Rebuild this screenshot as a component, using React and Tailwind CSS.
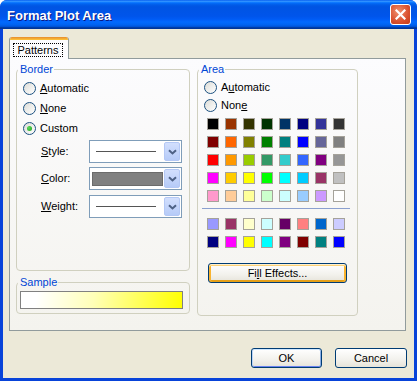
import React from "react";

const areaRows = [
  ["#000000", "#993300", "#333300", "#003300", "#003366", "#000080", "#333399", "#333333"],
  ["#800000", "#FF6600", "#808000", "#008000", "#008080", "#0000FF", "#666699", "#808080"],
  ["#FF0000", "#FF9900", "#99CC00", "#339966", "#33CCCC", "#3366FF", "#800080", "#969696"],
  ["#FF00FF", "#FFCC00", "#FFFF00", "#00FF00", "#00FFFF", "#00CCFF", "#993366", "#C0C0C0"],
  ["#FF99CC", "#FFCC99", "#FFFF99", "#CCFFCC", "#CCFFFF", "#99CCFF", "#CC99FF", "#FFFFFF"],
];

// chart fill / line colours below the separator
const chartRows = [
  ["#9999FF", "#993366", "#FFFFCC", "#CCFFFF", "#660066", "#FF8080", "#0066CC", "#CCCCFF"],
  ["#000080", "#FF00FF", "#FFFF00", "#00FFFF", "#800080", "#800000", "#008080", "#0000FF"],
];

function Radio({ checked, children, className = "" }) {
  return (
    <label className={`flex items-center gap-[4px] ${className}`}>
      <span className="w-[13px] h-[13px] rounded-full border border-[#1C5180] bg-[linear-gradient(135deg,#DCDCD7,#FFFFFF)] flex items-center justify-center">
        {checked && (
          <span className="w-[5px] h-[5px] rounded-full bg-[radial-gradient(circle_at_35%_35%,#5ADA5A,#21A121)]"></span>
        )}
      </span>
      <span>{children}</span>
    </label>
  );
}

function Chevron() {
  return (
    <svg width="9" height="6" viewBox="0 0 9 6" fill="none">
      <path d="M1 1.2L4.5 4.5L8 1.2" stroke="#4D6185" strokeWidth="2" />
    </svg>
  );
}

function Combo({ children }) {
  return (
    <div className="w-[93px] h-[23px] border border-[#7F9DB9] bg-white flex">
      <div className="flex-1 flex items-center">{children}</div>
      <div className="w-[16px] my-px mr-px rounded-[2px] border border-[#B4C8F5] bg-[linear-gradient(to_bottom,#D2DFFD,#B6CBF8)] flex items-center justify-center">
        <Chevron />
      </div>
    </div>
  );
}

function Swatches({ rows }) {
  return (
    <div className="grid grid-cols-[repeat(8,12px)] auto-rows-[12px] gap-[6px]">
      {rows.flat().map((c, i) => (
        <div key={i} className="border border-[#A5A29A]" style={{ backgroundColor: c }}></div>
      ))}
    </div>
  );
}

function XpButton({ children, variant, className = "" }) {
  const ring =
    variant === "default"
      ? "shadow-[inset_0_1px_0_#CEE7FF,inset_1px_0_0_#BCD4F6,inset_-1px_0_0_#89ADE4,inset_0_-1px_0_#6982EE]"
      : variant === "hot"
      ? "shadow-[inset_0_1px_0_#FFF0CF,inset_0_2px_0_#FCD277,inset_2px_0_0_#F8B330,inset_-2px_0_0_#F8B330,inset_0_-2px_0_#E5A01A]"
      : "";
  return (
    <button
      className={`h-[20px] rounded-[3px] border border-[#003C74] bg-[linear-gradient(to_bottom,#FFFFFF,#F2F1EC_60%,#E6E3D9)] text-[11px] leading-none flex items-center justify-center ${ring} ${className}`}
    >
      {children}
    </button>
  );
}

export default function App() {
  return (
    <div className="w-[417px] h-[381px] bg-white font-['Liberation_Sans',Arial,sans-serif] text-[11px] leading-[13px] text-black">
      <div className="w-full h-full flex flex-col rounded-t-[7px] overflow-hidden bg-[#0843D9]">
        {/* Title bar */}
        <div className="h-[29px] shrink-0 flex items-center justify-between pl-[7px] pr-[6px] bg-[linear-gradient(to_bottom,#0058EE_0%,#3593FF_4%,#288EFF_6%,#127DFF_8%,#036FFC_10%,#0262EE_14%,#0057E5_20%,#0054E3_24%,#0055EB_56%,#005BF5_66%,#026AFE_76%,#0062EF_86%,#0052D6_92%,#0040AB_94%,#003092_100%)]">
          <span className="text-white font-bold text-[13px] pt-[2px] [text-shadow:1px_1px_#0A1883]">
            Format Plot Area
          </span>
          <div className="w-[21px] h-[21px] rounded-[3px] border border-white bg-[radial-gradient(circle_at_40%_35%,#F0916F,#D9502E_60%,#C13A18)] flex items-center justify-center">
            <svg width="11" height="11" viewBox="0 0 11 11">
              <path d="M1.5 1.5L9.5 9.5M9.5 1.5L1.5 9.5" stroke="white" strokeWidth="2.2" strokeLinecap="square" />
            </svg>
          </div>
        </div>

        {/* Client area */}
        <div className="flex-1 mx-[3px] mb-[3px] bg-[#ECE9D8] flex flex-col pt-[8px] pl-[6px]">
          <div className="flex h-[22px] -mb-px relative z-10">
            <div className="w-[60px] h-full flex flex-col rounded-t-[3px] overflow-hidden border-x border-[#919B9C] bg-[#FCFCFE]">
              <div className="h-[3px] bg-[linear-gradient(to_bottom,#E68B2C,#FFC73C)]"></div>
              <div className="flex-1 pt-[3px] pl-[3px]">
                <div className="w-[50px] h-[14px] border border-dotted border-black flex items-center justify-center">
                  Patterns
                </div>
              </div>
            </div>
          </div>

          <div className="w-[397px] h-[273px] border border-[#919B9C] bg-[linear-gradient(to_bottom,#FCFCFE,#F4F3EE)] flex gap-[7px] pl-[6px] pt-[4px]">
            <div className="w-[174px] flex flex-col gap-[5px]">
              <fieldset className="h-[208px] border border-[#D0D0BF] rounded-[4px]">
                <legend className="ml-px pl-[2px] pr-[1px] leading-[12px] text-[#0046D5]">Border</legend>
                <div className="flex flex-col pl-[6px] mt-[3px]">
                  <Radio className="h-[20px]">
                    <span className="underline">A</span>utomatic
                  </Radio>
                  <Radio className="h-[20px]">
                    <span className="underline">N</span>one
                  </Radio>
                  <Radio className="h-[20px]" checked>
                    Custom
                  </Radio>
                </div>
                <div className="flex flex-col pl-[24px] mt-[2px]">
                  <div className="flex items-center">
                    <span className="w-[48px]">
                      <span className="underline">S</span>tyle:
                    </span>
                    <Combo>
                      <div className="ml-[6px] w-[60px] h-px bg-[#555555]"></div>
                    </Combo>
                  </div>
                  <div className="flex items-center mt-[4px]">
                    <span className="w-[48px]">
                      <span className="underline">C</span>olor:
                    </span>
                    <Combo>
                      <div className="ml-[2px] w-[71px] h-[14px] bg-[#808080] border border-[#6B6B6B]"></div>
                    </Combo>
                  </div>
                  <div className="flex items-center mt-[5px]">
                    <span className="w-[48px]">
                      <span className="underline">W</span>eight:
                    </span>
                    <Combo>
                      <div className="ml-[6px] w-[60px] h-px bg-[#555555]"></div>
                    </Combo>
                  </div>
                </div>
              </fieldset>

              <fieldset className="h-[38px] border border-[#D0D0BF] rounded-[4px]">
                <legend className="ml-px pl-[2px] pr-[1px] leading-[12px] text-[#0046D5]">Sample</legend>
                <div className="ml-[3px] mt-[3px] w-[163px] h-[18px] border border-[#808080] bg-[linear-gradient(100deg,#FFFFFF_10%,#FFFFB8_45%,#FFFF00_100%)]"></div>
              </fieldset>
            </div>

            <fieldset className="w-[161px] h-[253px] border border-[#D0D0BF] rounded-[4px]">
              <legend className="ml-px pl-[2px] pr-[1px] leading-[12px] text-[#0046D5]">Area</legend>
              <div className="flex flex-col pl-[6px] mt-[3px]">
                <Radio className="h-[18px]">
                  A<span className="underline">u</span>tomatic
                </Radio>
                <Radio className="h-[18px]">
                  Non<span className="underline">e</span>
                </Radio>
              </div>
              <div className="ml-[9px] mt-[4px]">
                <Swatches rows={areaRows} />
              </div>
              <div className="ml-[4px] mt-[6px] w-[148px] h-px bg-[#8BA0CF]"></div>
              <div className="ml-[9px] mt-[9px]">
                <Swatches rows={chartRows} />
              </div>
              <XpButton variant="hot" className="ml-[10px] mt-[15px] w-[139px]">
                Fi<span className="underline">l</span>l Effects...
              </XpButton>
            </fieldset>
          </div>

          <div className="flex justify-end gap-[13px] mt-[17px] pr-[7px]">
            <XpButton variant="default" className="w-[71px]">OK</XpButton>
            <XpButton className="w-[72px]">Cancel</XpButton>
          </div>
        </div>
      </div>
    </div>
  );
}
